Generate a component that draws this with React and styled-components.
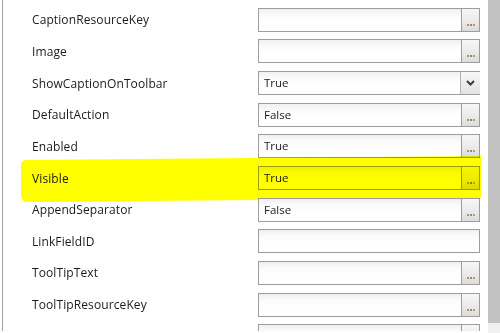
import React from "react";
import styled, { createGlobalStyle } from "styled-components";

const props = [
  { name: "CaptionResourceKey", value: "", kind: "button" },
  { name: "Image", value: "", kind: "button" },
  { name: "ShowCaptionOnToolbar", value: "True", kind: "select" },
  { name: "DefaultAction", value: "False", kind: "button" },
  { name: "Enabled", value: "True", kind: "button" },
  { name: "Visible", value: "True", kind: "button", marked: true },
  { name: "AppendSeparator", value: "False", kind: "button" },
  { name: "LinkFieldID", value: "", kind: "text" },
  { name: "ToolTipText", value: "", kind: "button" },
  { name: "ToolTipResourceKey", value: "", kind: "button" },
  { name: "Visibility", value: "", kind: "button" },
];

export default function App() {
  return (
    <>
      <Global />
      <Frame>
        <Grid>
          {props.map((p) => (
            <Row key={p.name}>
              <Label>{p.name}</Label>
              <Field>
                <Value>{p.value}</Value>
                {p.kind === "button" && (
                  <EllipsisButton>
                    <Dot $c="#d08a3a" />
                    <Dot $c="#6f8fb8" />
                    <Dot $c="#c49a5a" />
                  </EllipsisButton>
                )}
                {p.kind === "select" && (
                  <DropButton>
                    <svg width="9" height="6" viewBox="0 0 9 6">
                      <path
                        d="M1 1 L4.5 4.5 L8 1"
                        fill="none"
                        stroke="#3c3c3c"
                        strokeWidth="2"
                      />
                    </svg>
                  </DropButton>
                )}
              </Field>
              {p.marked && <Marker />}
            </Row>
          ))}
        </Grid>
        <Scrollbar>
          <Thumb />
        </Scrollbar>
      </Frame>
    </>
  );
}

const Global = createGlobalStyle`
  html, body {
    margin: 0;
    padding: 0;
    background: #fff;
  }
  body {
    font-family: "Open Sans", "Noto Sans", sans-serif;
  }
`;

const Frame = styled.div`
  width: 500px;
  height: 333px;
  overflow: hidden;
  display: flex;
  background: #fff;
`;

const Grid = styled.div`
  flex: 1;
  margin-left: 2px;
  height: 327px;
  border-left: 1px solid #a0a0a0;
  padding-top: 4px;
  display: flex;
  flex-direction: column;
  overflow: hidden;
`;

const Row = styled.div`
  position: relative;
  flex: 0 0 31.65px;
  display: grid;
  grid-template-columns: 255px 222px;
  align-items: center;
`;

const Label = styled.div`
  padding-left: 29px;
  font-size: 12px;
  letter-spacing: 0.1px;
  color: #1b1b1b;
  white-space: nowrap;
`;

const Field = styled.div`
  height: 24px;
  box-sizing: border-box;
  border: 1px solid #9d9d9d;
  background: linear-gradient(to bottom, #efefef 0, #fafafa 25%, #fff 60%);
  display: flex;
  align-items: stretch;
`;

const Value = styled.div`
  flex: 1;
  padding-left: 5px;
  font-size: 11.5px;
  line-height: 22px;
  color: #1b1b1b;
`;

const EllipsisButton = styled.div`
  width: 18px;
  border-left: 1px solid #9d9d9d;
  background: linear-gradient(to bottom, #f6f6f6 0, #ececec 50%, #dcdcdc 100%);
  display: flex;
  justify-content: center;
  align-items: flex-end;
  gap: 1px;
  padding-bottom: 5px;
  box-sizing: border-box;
`;

const Dot = styled.span`
  width: 2px;
  height: 2px;
  background: ${(p) => p.$c};
`;

const DropButton = styled.div`
  width: 19px;
  margin-right: -1px;
  border-left: 1px solid #b4b4b4;
  background: linear-gradient(to bottom, #f8f8f8 0, #ededed 50%, #e2e2e2 100%);
  display: flex;
  justify-content: center;
  align-items: center;
`;

const Marker = styled.div`
  position: absolute;
  left: 18px;
  right: -4px;
  top: -4px;
  bottom: -6px;
  background: #ffff00;
  mix-blend-mode: multiply;
  border-radius: 5px 3px 4px 6px;
  transform: skewY(-0.5deg);
  pointer-events: none;
`;

const Scrollbar = styled.div`
  width: 12px;
  margin-left: 7px;
  background: #f0f0f0;
`;

const Thumb = styled.div`
  height: 323px;
  background: #c2c2c2;
`;
